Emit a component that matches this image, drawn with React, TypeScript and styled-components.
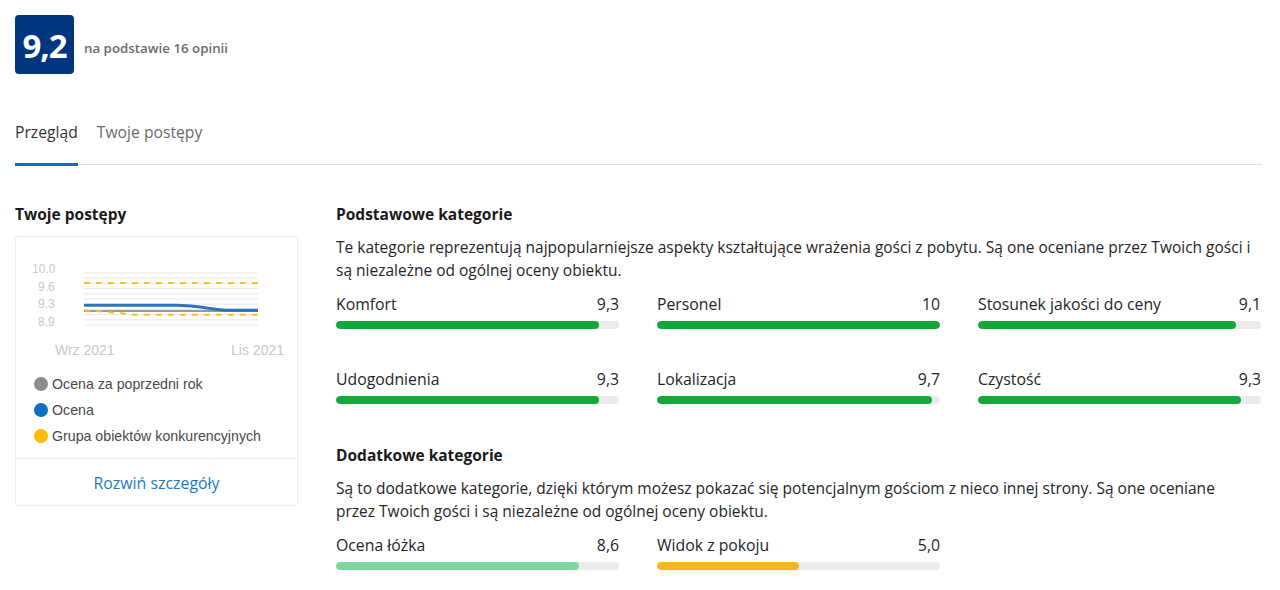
import React from "react";
import styled, { createGlobalStyle } from "styled-components";

const GlobalStyle = createGlobalStyle`
  html, body { margin: 0; padding: 0; background: #fff; }
  body { font-family: "Open Sans", "Noto Sans", sans-serif; color: #262626; }
  * { box-sizing: border-box; }
`;

const Page = styled.div`
  width: 1280px;
  height: 590px;
  padding: 15px 18px 0 15px;
  overflow: hidden;
`;

const ScoreRow = styled.div`
  display: flex;
  align-items: center;
  gap: 10px;
`;

const ScoreBadge = styled.div`
  width: 59px;
  height: 59px;
  border-radius: 4px;
  background: #003580;
  color: #fff;
  display: flex;
  align-items: center;
  justify-content: center;
  font-size: 33px;
  font-weight: 700;
  letter-spacing: -1px;
  padding-top: 1px;
`;

const ScoreNote = styled.span`
  font-size: 13.3px;
  font-weight: 600;
  color: #6b6b6b;
  margin-top: 6px;
`;

const Tabs = styled.div`
  display: flex;
  gap: 19px;
  margin-top: 40px;
  border-bottom: 1px solid #e0e0e0;
`;

const Tab = styled.div<{ $active?: boolean }>`
  font-size: 15.7px;
  line-height: 20px;
  padding: 8px 0 21px;
  color: ${(p) => (p.$active ? "#333" : "#6b6b6b")};
  border-bottom: 3px solid ${(p) => (p.$active ? "#0071c2" : "transparent")};
  margin-bottom: -2px;
`;

const Grid = styled.div`
  display: grid;
  grid-template-columns: 283px 1fr;
  column-gap: 38px;
  margin-top: 39px;
`;

const SectionTitle = styled.h3`
  margin: 0;
  font-size: 15.5px;
  line-height: 20px;
  font-weight: 700;
  color: #1a1a1a;
`;

const Card = styled.div`
  margin-top: 12px;
  border: 1px solid #ececec;
  border-radius: 3px;
  display: flex;
  flex-direction: column;
`;

const ChartSvg = styled.svg`
  display: block;
  margin-top: 14px;
  font-family: "Liberation Sans", Arial, sans-serif;
`;

const Legend = styled.ul`
  list-style: none;
  margin: 14px 0 0;
  padding: 0 0 12px 18px;
  display: flex;
  flex-direction: column;
  gap: 6px;
`;

const LegendItem = styled.li`
  display: flex;
  align-items: center;
  gap: 4px;
  font-family: "Liberation Sans", Arial, sans-serif;
  font-size: 14.2px;
  line-height: 20px;
  color: #4a4a4a;
`;

const Dot = styled.span<{ $color: string }>`
  width: 14px;
  height: 14px;
  border-radius: 50%;
  background: ${(p) => p.$color};
`;

const CardFooter = styled.div`
  border-top: 1px solid #ececec;
  padding: 13px 0 11px;
  text-align: center;
`;

const Link = styled.a`
  font-size: 15.9px;
  line-height: 20px;
  color: #1f78c2;
  text-decoration: none;
`;

const Section = styled.section`
  & + & { margin-top: 41px; }
`;

const Paragraph = styled.p<{ $maxWidth?: number }>`
  margin: 12px 0 0;
  max-width: ${(p) => (p.$maxWidth ? `${p.$maxWidth}px` : "none")};
  font-size: 15.5px;
  line-height: 23px;
  color: #262626;
`;

const Bars = styled.div`
  display: grid;
  grid-template-columns: repeat(3, 283px);
  column-gap: 38px;
  row-gap: 40px;
  margin-top: 12px;
`;

const BarItem = styled.div`
  display: flex;
  flex-direction: column;
  gap: 7px;
`;

const BarHead = styled.div`
  display: flex;
  justify-content: space-between;
  font-size: 15.8px;
  line-height: 20px;
  color: #262626;
`;

const Track = styled.div`
  height: 8px;
  border-radius: 4px;
  background: #ebebeb;
  overflow: hidden;
`;

const Fill = styled.div<{ $color: string }>`
  height: 100%;
  border-radius: 4px;
  background: ${(p) => p.$color};
`;

type Cat = { name: string; value: string; color: string };

const basic: Cat[] = [
  { name: "Komfort", value: "9,3", color: "#14a83b" },
  { name: "Personel", value: "10", color: "#14a83b" },
  { name: "Stosunek jakości do ceny", value: "9,1", color: "#14a83b" },
  { name: "Udogodnienia", value: "9,3", color: "#14a83b" },
  { name: "Lokalizacja", value: "9,7", color: "#14a83b" },
  { name: "Czystość", value: "9,3", color: "#14a83b" },
];

const extra: Cat[] = [
  { name: "Ocena łóżka", value: "8,6", color: "#7fd6a0" },
  { name: "Widok z pokoju", value: "5,0", color: "#f6b812" },
];

function CategoryBars({ items }: { items: Cat[] }) {
  return (
    <Bars>
      {items.map((c) => {
        const pct = parseFloat(c.value.replace(",", ".")) * 10;
        return (
          <BarItem key={c.name}>
            <BarHead>
              <span>{c.name}</span>
              <span>{c.value}</span>
            </BarHead>
            <Track>
              <Fill $color={c.color} style={{ width: `${pct}%` }} />
            </Track>
          </BarItem>
        );
      })}
    </Bars>
  );
}

function Chart() {
  const grid = Array.from({ length: 11 }, (_, i) => 22 + i * 5.2);
  return (
    <ChartSvg width="281" height="109" viewBox="0 0 281 109">
      {grid.map((y) => (
        <line key={y} x1="68" x2="242" y1={y} y2={y} stroke="#e8e8e8" strokeWidth="1" />
      ))}
      <g fill="#c8c8c8" fontSize="12">
        <text x="16" y="22">10.0</text>
        <text x="22" y="40">9.6</text>
        <text x="22" y="57">9.3</text>
        <text x="22" y="75">8.9</text>
      </g>
      <line x1="68" x2="242" y1="32" y2="32" stroke="#f5c21b" strokeWidth="2" strokeDasharray="6 6" />
      <line x1="68" x2="242" y1="60" y2="60" stroke="#9a9a9a" strokeWidth="2" />
      <path d="M68 59.5 C 95 60 105 63.8 128 63.8 L 242 63.8" fill="none" stroke="#f5c21b" strokeWidth="2" strokeDasharray="6 6" />
      <path d="M68 54.3 L 160 54.3 C 185 54.3 195 59.3 215 59.3 L 242 59.3" fill="none" stroke="#2b76ba" strokeWidth="3" />
      <g fill="#c8c8c8" fontSize="14">
        <text x="39" y="104">Wrz 2021</text>
        <text x="268" y="104" textAnchor="end">Lis 2021</text>
      </g>
    </ChartSvg>
  );
}

export default function App() {
  return (
    <>
      <GlobalStyle />
      <Page>
        <ScoreRow>
          <ScoreBadge>9,2</ScoreBadge>
          <ScoreNote>na podstawie 16 opinii</ScoreNote>
        </ScoreRow>
        <Tabs>
          <Tab $active>Przegląd</Tab>
          <Tab>Twoje postępy</Tab>
        </Tabs>
        <Grid>
          <div>
            <SectionTitle>Twoje postępy</SectionTitle>
            <Card>
              <Chart />
              <Legend>
                <LegendItem>
                  <Dot $color="#8c8c8c" />
                  Ocena za poprzedni rok
                </LegendItem>
                <LegendItem>
                  <Dot $color="#0f6fc0" />
                  Ocena
                </LegendItem>
                <LegendItem>
                  <Dot $color="#febb02" />
                  Grupa obiektów konkurencyjnych
                </LegendItem>
              </Legend>
              <CardFooter>
                <Link>Rozwiń szczegóły</Link>
              </CardFooter>
            </Card>
          </div>
          <div>
            <Section>
              <SectionTitle>Podstawowe kategorie</SectionTitle>
              <Paragraph>
                Te kategorie reprezentują najpopularniejsze aspekty kształtujące wrażenia gości z pobytu. Są one oceniane przez Twoich gości i są niezależne od ogólnej oceny obiektu.
              </Paragraph>
              <CategoryBars items={basic} />
            </Section>
            <Section>
              <SectionTitle>Dodatkowe kategorie</SectionTitle>
              <Paragraph $maxWidth={900}>
                Są to dodatkowe kategorie, dzięki którym możesz pokazać się potencjalnym gościom z nieco innej strony. Są one oceniane przez Twoich gości i są niezależne od ogólnej oceny obiektu.
              </Paragraph>
              <CategoryBars items={extra} />
            </Section>
          </div>
        </Grid>
      </Page>
    </>
  );
}
